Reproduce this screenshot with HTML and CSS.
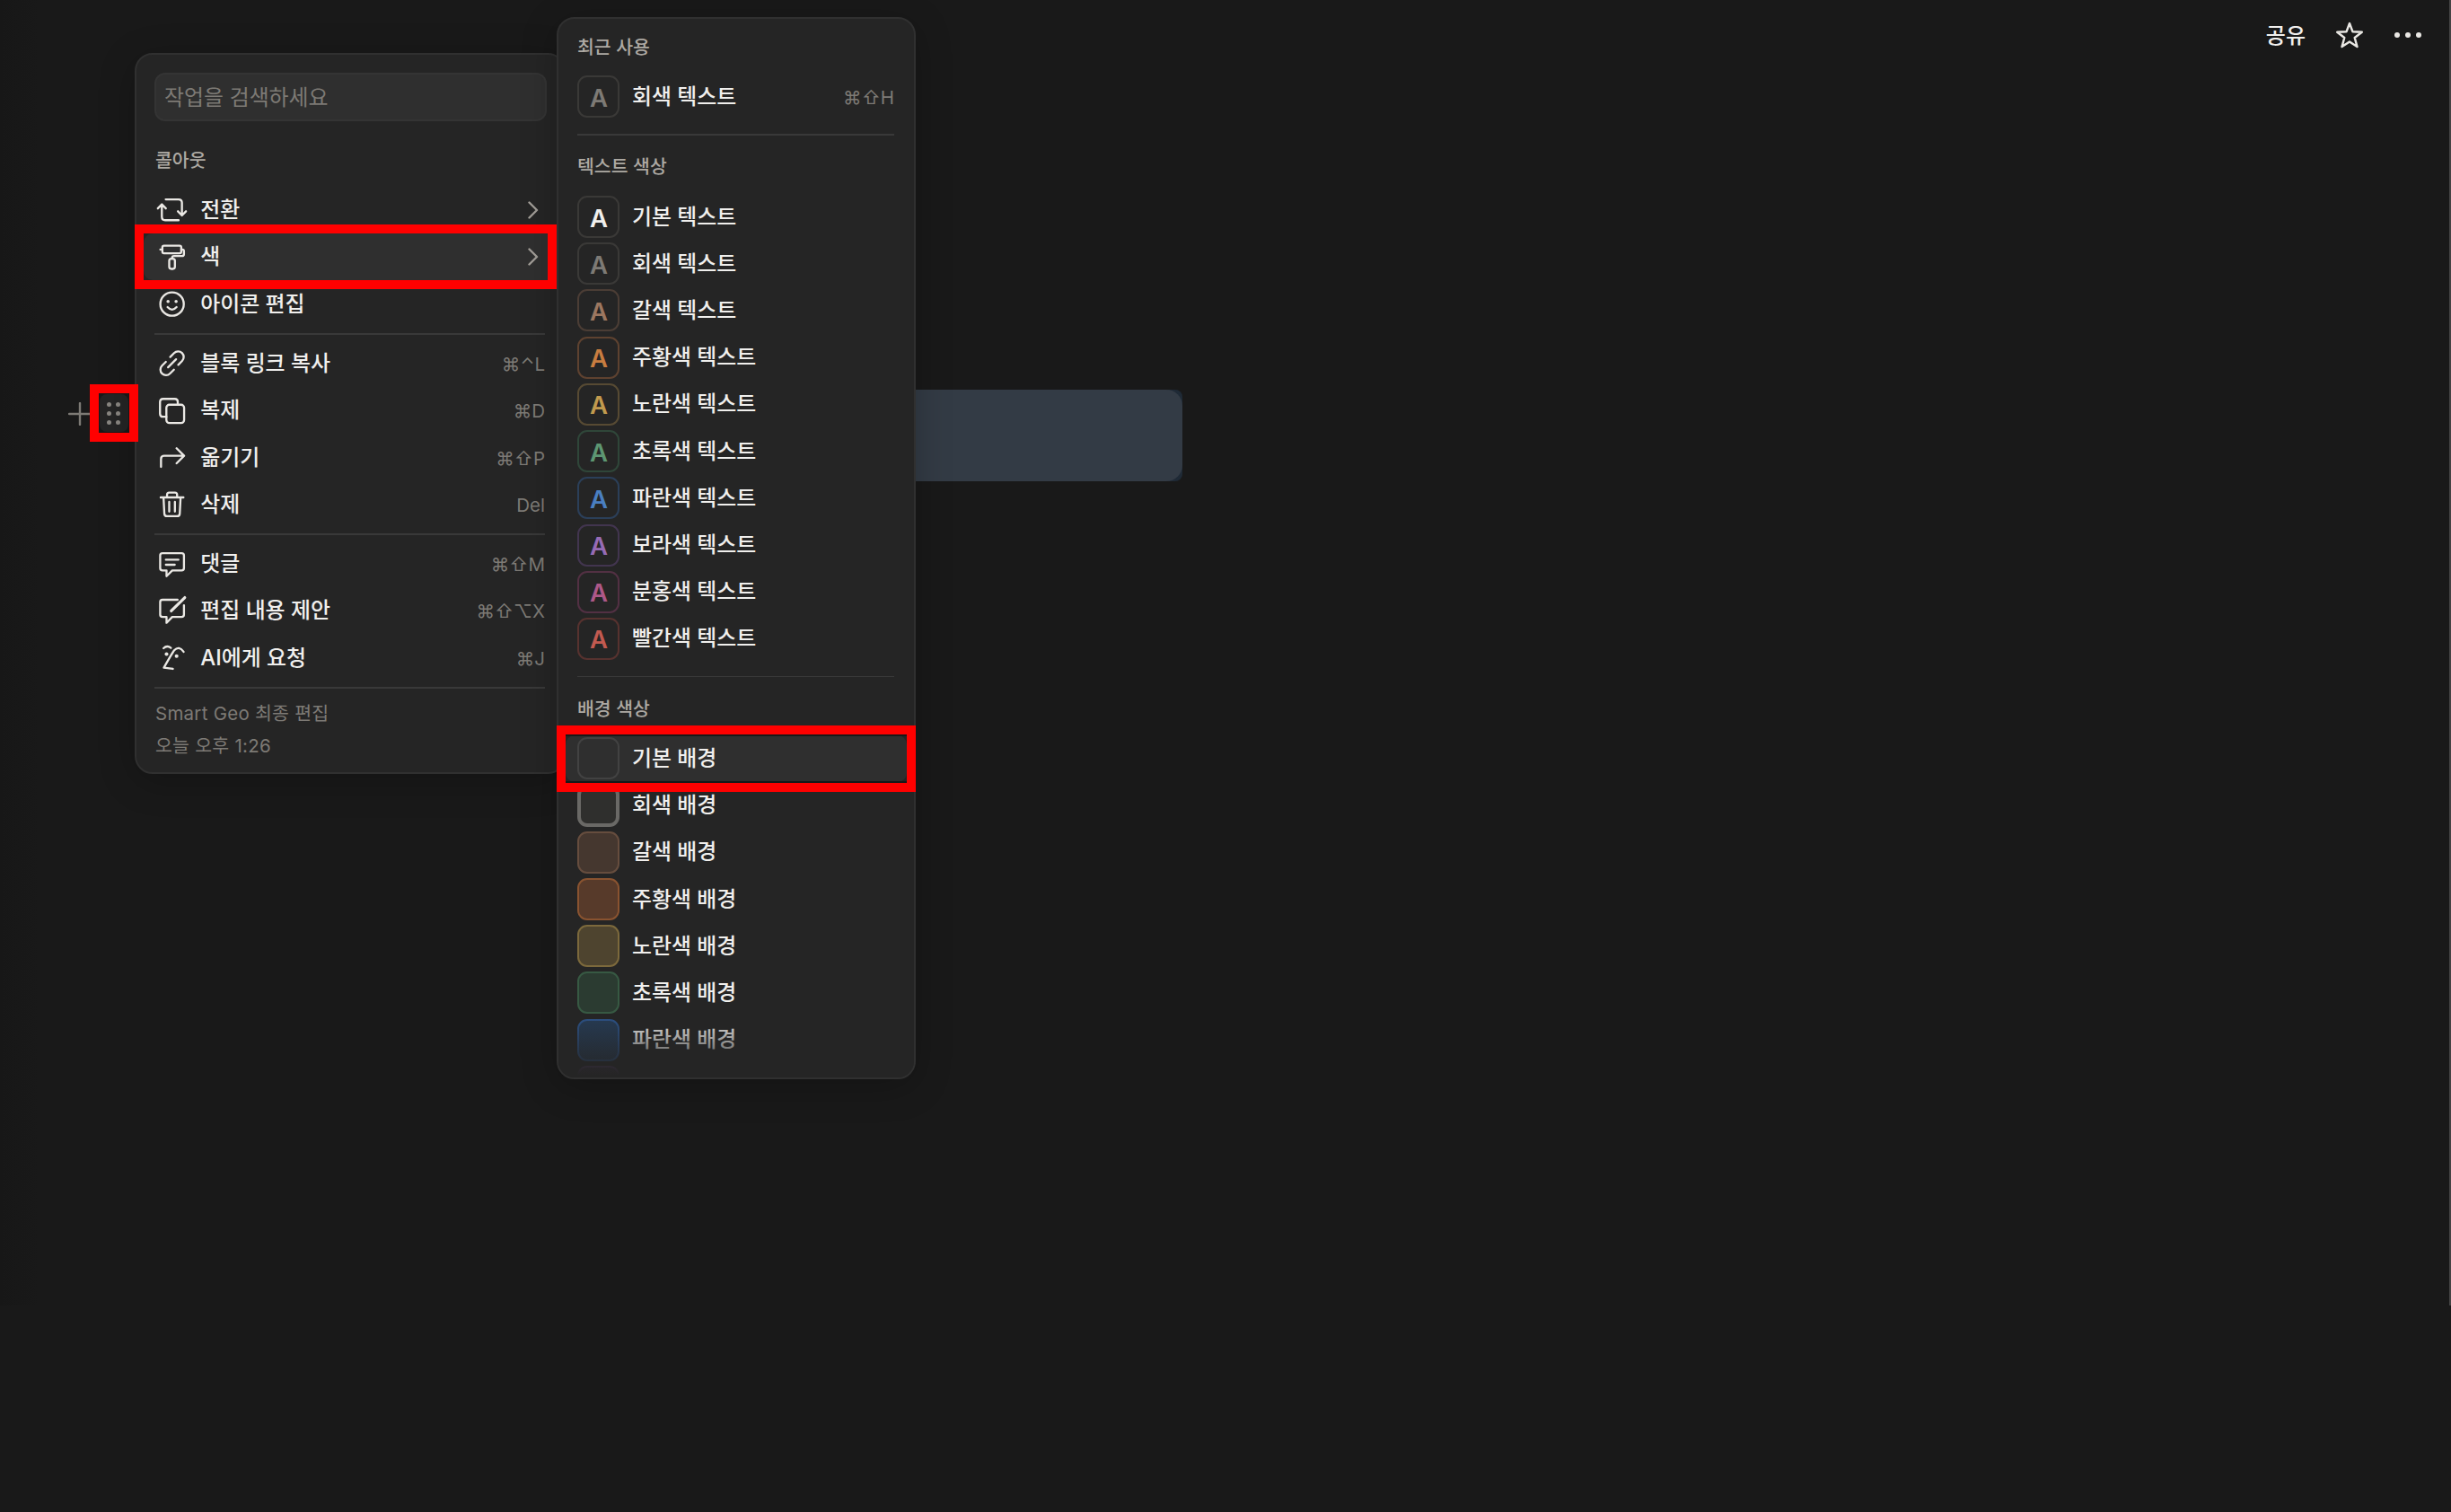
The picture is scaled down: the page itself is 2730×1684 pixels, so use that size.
FILE: index.html
```html
<!DOCTYPE html>
<html lang="ko">
<head>
    <meta charset="UTF-8">
    <meta name="viewport" content="width=device-width, initial-scale=1.0">
    <title>블록 메뉴</title>
    <link rel="stylesheet" href="styles.css">
</head>
<body>

  <div class="page">
    <header class="topbar">
      <span class="share">공유</span>
      <svg class="star" viewBox="0 0 32 32"><path d="M16 3l3.500 9.300 10.300.400-8.100 6.300 2.800 10.100L16 23.400l-8.500 5.700 2.800-10.100L2.200 12.700l10.300-.4z"/></svg>
      <svg class="more" viewBox="0 0 32 8"><circle cx="4" cy="4" r="3"/><circle cx="16" cy="4" r="3"/><circle cx="28" cy="4" r="3"/></svg>
    </header>

    <main class="block">
      <svg class="plus" viewBox="0 0 26 26"><path d="M13 1v24M1 13h24"/></svg>
      <div class="handle">
        <i></i><i></i><i></i><i></i><i></i><i></i>
      </div>
      <div class="callout"><div class="callout-inner"></div></div>
    </main>
  </div>

  <!-- Block menu -->
  <nav class="menu block-menu">
    <div class="search">작업을 검색하세요</div>
    <h2 class="title">콜아웃</h2>
    <div class="item">
      <svg class="icon" viewBox="0 0 20 20"><path d="M1.500 9.200l2.400-2.500 2.400 2.500M3.900 6.900v7.300q0 2 2 2h8M6.200 3.800h7.700q2 0 2 2v7.500M13.500 10.900l2.400 2.500 2.400-2.500"/></svg>
      <span class="label">전환</span>
      <svg class="chevron" viewBox="0 0 12 20"><path d="M1.500 1.500l8.500 8.500-8.500 8.500"/></svg>
    </div>
    <div class="item active">
      <svg class="icon" viewBox="0 0 20 20"><rect x="4.200" y="3" width="11.300" height="4.600" rx="1"/><path d="M3 5.300h1.200M15.500 5.300h.6q1 0 1 1V8q0 1.200-1.200 1.200h-4.700q-1.200 0-1.200 1.200v.4"/><rect x="8.300" y="10.800" width="3.400" height="6.100" rx="1.300"/></svg>
      <span class="label">색</span>
      <svg class="chevron" viewBox="0 0 12 20"><path d="M1.500 1.500l8.500 8.500-8.500 8.500"/></svg>
    </div>
    <div class="item">
      <svg class="icon" viewBox="0 0 20 20"><circle cx="10" cy="10" r="7"/><path d="M7.300 11.800q2.700 3 5.400 0"/><g class="solid"><circle cx="7.600" cy="8.500" r=".95"/><circle cx="12.400" cy="8.500" r=".95"/></g></svg>
      <span class="label">아이콘 편집</span>
    </div>
    <hr>
    <div class="item">
      <svg class="icon" viewBox="0 0 20 20"><path d="M7.600 12.400l4.800-4.800M8.900 6.200l2.300-2.300a3.300 3.300 0 0 1 4.800 4.700l-2.300 2.300M11.100 13.800l-2.300 2.300A3.300 3.300 0 0 1 4 11.400l2.300-2.300"/></svg>
      <span class="label">블록 링크 복사</span>
      <kbd>⌘⌃L</kbd>
    </div>
    <div class="item">
      <svg class="icon" viewBox="0 0 20 20"><rect x="6.600" y="6.300" width="10.600" height="10.900" rx="1.800"/><path d="M6.600 13.500H4.600q-1.800 0-1.800-1.800V4.600q0-1.800 1.800-1.800h7q1.800 0 1.800 1.800v1.700"/></svg>
      <span class="label">복제</span>
      <kbd>⌘D</kbd>
    </div>
    <div class="item">
      <svg class="icon" viewBox="0 0 20 20"><path d="M3.400 15.600v-4.800q0-1.900 1.900-1.900h11.800M12.700 4.400l4.500 4.500-4.500 4.500"/></svg>
      <span class="label">옮기기</span>
      <kbd>⌘⇧P</kbd>
    </div>
    <div class="item">
      <svg class="icon" viewBox="0 0 20 20"><path d="M3.200 5.900h13.600M7 5.700V4.300q0-1.300 1.300-1.300h3.400q1.300 0 1.300 1.300v1.400M4.900 5.900l.5 9.700q.1 1.500 1.600 1.500h6q1.500 0 1.600-1.500l.5-9.700M8.300 8.600v5.800M11.700 8.600v5.800"/></svg>
      <span class="label">삭제</span>
      <kbd>Del</kbd>
    </div>
    <hr>
    <div class="item">
      <svg class="icon" viewBox="0 0 20 20"><path d="M4.300 3.300h11.400q1.400 0 1.400 1.400v7.500q0 1.400-1.400 1.400h-5.600L6.700 17v-3.400H4.300q-1.400 0-1.400-1.400V4.700q0-1.400 1.400-1.400zM6.300 7.200h7.500M6.300 10.200h5.300"/></svg>
      <span class="label">댓글</span>
      <kbd>⌘⇧M</kbd>
    </div>
    <div class="item">
      <svg class="icon" viewBox="0 0 20 20"><path d="M13.300 3.200h-9q-1.400 0-1.400 1.400v7.500q0 1.400 1.400 1.400h2.400V17l3.400-3.500h5.600q1.400 0 1.400-1.400V6.500"/><path class="pen" d="M17.600 1.900L9.500 9.900"/></svg>
      <span class="label">편집 내용 제안</span>
      <kbd>⌘⇧⌥X</kbd>
    </div>
    <div class="item">
      <svg class="icon" viewBox="0 0 20 20"><path d="M4.900 4.300q2.100-2 4.400-.2M16.900 6.400q-2.700-3.900-5.600-.9-1.100 1.400-6.200 10.400l5.400.7"/><g class="solid"><circle cx="6.700" cy="7.800" r="1.100"/><circle cx="12.700" cy="9" r="1.100"/></g></svg>
      <span class="label">AI에게 요청</span>
      <kbd>⌘J</kbd>
    </div>
    <hr>
    <p class="meta">Smart Geo 최종 편집<br>오늘 오후 1:26</p>
  </nav>

  <!-- Colour submenu -->
  <nav class="menu color-menu">
    <h2 class="title">최근 사용</h2>
    <div class="item"><span class="chip gray">A</span><span class="label">회색 텍스트</span><kbd>⌘⇧H</kbd></div>
    <hr>
    <h2 class="title">텍스트 색상</h2>
    <div class="item"><span class="chip">A</span><span class="label">기본 텍스트</span></div>
    <div class="item"><span class="chip gray">A</span><span class="label">회색 텍스트</span></div>
    <div class="item"><span class="chip brown">A</span><span class="label">갈색 텍스트</span></div>
    <div class="item"><span class="chip orange">A</span><span class="label">주황색 텍스트</span></div>
    <div class="item"><span class="chip yellow">A</span><span class="label">노란색 텍스트</span></div>
    <div class="item"><span class="chip green">A</span><span class="label">초록색 텍스트</span></div>
    <div class="item"><span class="chip blue">A</span><span class="label">파란색 텍스트</span></div>
    <div class="item"><span class="chip purple">A</span><span class="label">보라색 텍스트</span></div>
    <div class="item"><span class="chip pink">A</span><span class="label">분홍색 텍스트</span></div>
    <div class="item"><span class="chip red">A</span><span class="label">빨간색 텍스트</span></div>
    <hr class="thin">
    <h2 class="title">배경 색상</h2>
    <div class="item active"><span class="chip bg-default"></span><span class="label">기본 배경</span></div>
    <div class="item"><span class="chip bg-gray"></span><span class="label">회색 배경</span></div>
    <div class="item"><span class="chip bg-brown"></span><span class="label">갈색 배경</span></div>
    <div class="item"><span class="chip bg-orange"></span><span class="label">주황색 배경</span></div>
    <div class="item"><span class="chip bg-yellow"></span><span class="label">노란색 배경</span></div>
    <div class="item"><span class="chip bg-green"></span><span class="label">초록색 배경</span></div>
    <div class="item"><span class="chip bg-blue"></span><span class="label">파란색 배경</span></div>
    <div class="item"><span class="chip bg-purple"></span></div>
    <div class="fade"></div>
  </nav>

  <!-- Highlight frames -->
  <div class="frame frame-color"></div>
  <div class="frame frame-handle"></div>
  <div class="frame frame-default"></div>

</body>
</html>
```

FILE: styles.css
```css
* {
    box-sizing: border-box;
}

body {
    margin: 0;
    height: 1684px;
    position: relative;
    overflow: hidden;
    background: #191919;
    color: #f0efed;
    font-family: Inter, "Noto Sans CJK KR", sans-serif;
    font-size: 24px;
}

svg {
    display: block;
    fill: none;
    flex: none;
}

.page {
    height: 1454px;
    border-right: 2px solid #444;
    background: linear-gradient(to right, #171717, #191919 44px);
}

.topbar {
    display: flex;
    align-items: center;
    justify-content: flex-end;
    height: 78px;
    padding-right: 30px;
}

.share {
    font-weight: 500;
    margin-right: 33px;
    padding-bottom: 3px;
}

.star {
    width: 32px;
    height: 32px;
    margin-right: 33px;
    stroke: #eae8e4;
    stroke-width: 2.4;
    stroke-linejoin: round;
}

.more {
    width: 32px;
    height: 8px;
    fill: #eae8e4;
}

.block {
    display: flex;
    align-items: flex-start;
    margin-top: 356px;
    padding-left: 76px;
}

.plus {
    width: 26px;
    height: 26px;
    margin-top: 14px;
    stroke: #7d7a75;
    stroke-width: 2.4;
    stroke-linecap: round;
}

.handle {
    display: grid;
    grid-template-columns: 5px 5px;
    gap: 5px;
    place-content: center;
    width: 32px;
    height: 42px;
    margin: 5px 8px 0 9px;
    padding-right: 1px;
    border-radius: 8px;
    background: #252525;
}

.handle i {
    width: 5px;
    height: 5px;
    border-radius: 50%;
    background: #8a8782;
}

.callout {
    width: 1166px;
    height: 102px;
    border-radius: 8px;
    background: #1f2a36;
}

.callout-inner {
    height: 100%;
    border-radius: 18px;
    background: #333b45;
}

/* Menus */
.menu {
    position: absolute;
    background: #252525;
    border: 2px solid #303030;
    border-radius: 20px;
    box-shadow: 0 8px 40px rgba(0, 0, 0, 0.22);
    overflow: hidden;
}

.block-menu {
    left: 150px;
    top: 59px;
    width: 480px;
    height: 803px;
    padding: 20px 8px 0;
}

.color-menu {
    left: 620px;
    top: 19px;
    width: 400px;
    height: 1183px;
    padding: 12.5px 8px 0;
}

.search {
    height: 54px;
    margin: 0 11px 0 12px;
    padding: 0 9px;
    border: 2px solid #343434;
    border-radius: 12px;
    background: #2f2f2f;
    color: #7d7a75;
    font-size: 23.9px;
    line-height: 51px;
}

.title {
    margin: 0;
    padding: 0 13px;
    height: 37px;
    color: #ada9a3;
    font-size: 20.5px;
    font-weight: 500;
    line-height: 37px;
}

.block-menu .title {
    margin: 25px 0 11px;
}

.item {
    display: flex;
    align-items: center;
    height: 52.22px;
    padding: 0 13px;
    border-radius: 10px;
}

.item.active {
    background: #2f2f2f;
}

.icon {
    width: 37.3px;
    height: 37.3px;
    margin-right: 13px;
    stroke: #eae8e4;
    stroke-width: 1.25;
    stroke-linecap: round;
    stroke-linejoin: round;
}

.icon .solid {
    fill: #eae8e4;
    stroke: none;
}

.icon .pen {
    stroke-width: 1.7;
}

.label {
    flex: 1;
    font-size: 23.9px;
    font-weight: 500;
    line-height: 36px;
    white-space: nowrap;
}

.chevron {
    width: 12px;
    height: 20px;
    margin-right: 7px;
    stroke: #a09c96;
    stroke-width: 2.4;
    stroke-linecap: round;
    stroke-linejoin: round;
}

kbd {
    padding-top: 1px;
    color: #7d7a75;
    font-family: Inter, sans-serif;
    font-size: 20.5px;
}

hr {
    height: 2px;
    margin: 6.3px 13px 6px 12px;
    border: 0;
    background: #393939;
}

.meta {
    margin: 9.5px 13px 0;
    color: #7d7a75;
    font-size: 20.5px;
    letter-spacing: 0.25px;
    line-height: 36px;
}

/* Colour submenu */
.color-menu .item {
    padding: 0 14px 0 13px;
}

.color-menu hr {
    margin: 15.3px 14px 16.4px 13px;
}

.color-menu hr.thin {
    height: 1px;
    margin-bottom: 16.9px;
}

.color-menu .title + .item {
    margin-top: 11px;
}

.chip {
    display: flex;
    align-items: center;
    justify-content: center;
    flex: none;
    width: 47px;
    height: 47px;
    margin-right: 14px;
    padding: 2px 0 0 1px;
    border: 2px solid #3a3937;
    border-radius: 11px;
    font-size: 27.5px;
    font-weight: 600;
}

.gray { color: #7d7a75; }
.brown { color: #9c7760; border-color: #4b3d35; }
.orange { color: #c87d40; border-color: #5e4230; }
.yellow { color: #c19a4e; border-color: #574a33; }
.green { color: #5d9672; border-color: #2f4639; }
.blue { color: #4a7fc1; border-color: #2b3f59; }
.purple { color: #966bb5; border-color: #42354f; }
.pink { color: #ad5888; border-color: #523043; }
.red { color: #c25a50; border-color: #57322f; }

.bg-default { border-color: #424242; }
.bg-gray { background: #2f2f2d; border: 4px solid #6a6966; }
.bg-brown { background: #45372f; border-color: #664d3e; }
.bg-orange { background: #573a2a; border-color: #895330; }
.bg-yellow { background: #4e442f; border-color: #7c693c; }
.bg-green { background: #2b3b31; border-color: #375943; }
.bg-blue { background: #263b54; border-color: #2c5287; }
.bg-purple { background: #3c2d49; border-color: #5b3d73; }

.fade {
    position: absolute;
    left: 0;
    right: 0;
    bottom: 0;
    height: 70px;
    background: linear-gradient(to bottom, rgba(37, 37, 37, 0), #252525 68px);
}

/* Frames sit on top of the rows they point at */
.frame {
    position: absolute;
    border: 10px solid #ff0000;
}

.frame-color {
    left: 150px;
    top: 250px;
    width: 470px;
    height: 72px;
}

.frame-handle {
    left: 100px;
    top: 428px;
    width: 54px;
    height: 64px;
}

.frame-default {
    left: 620px;
    top: 808px;
    width: 400px;
    height: 74px;
    box-shadow: inset 0 2px 0 #181818, inset 0 -2px 0 #181818;
}
```
